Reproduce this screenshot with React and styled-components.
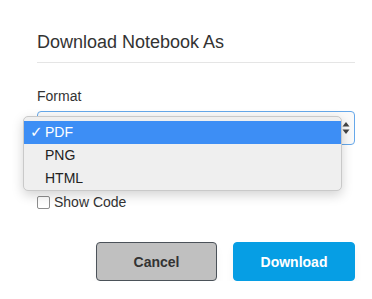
import React from "react";
import styled, { createGlobalStyle } from "styled-components";

const Global = createGlobalStyle`
  html, body { margin: 0; padding: 0; background: #fff; }
  body { font-family: "Liberation Sans", Arial, Helvetica, sans-serif; color: #333; }
`;

const Dialog = styled.div`
  width: 318px;
  padding: 32px 17px 0 37px;
`;

const Header = styled.div`
  border-bottom: 1px solid #e5e5e5;
  padding-bottom: 10px;
`;

const Title = styled.h3`
  margin: 0;
  font-size: 18px;
  line-height: 20px;
  font-weight: normal;
  color: #333;
`;

const Label = styled.div`
  margin-top: 23px;
  font-size: 14px;
  line-height: 20px;
  color: #333;
`;

const SelectWrap = styled.div`
  position: relative;
  margin-top: 5px;
  height: 32px;
  border: 1px solid #66a8ea;
  border-radius: 4px;
  background: #fafafa;
`;

const Arrows = styled.svg`
  position: absolute;
  right: 4px;
  top: 9px;
`;

const Menu = styled.ul`
  position: absolute;
  left: -15px;
  top: 4px;
  width: 319px;
  margin: 0;
  padding: 4px 0 2px;
  list-style: none;
  background: #efefef;
  border: 1px solid #c9c9c9;
  border-radius: 5px;
  box-shadow: 0 4px 12px rgba(0, 0, 0, 0.18);
  box-sizing: border-box;
  height: 75px;
`;

const Item = styled.li`
  position: relative;
  height: 23px;
  line-height: 22px;
  padding-left: 21px;
  font-size: 14px;
  color: ${(p) => (p.$active ? "#fff" : "#222")};
  background: ${(p) => (p.$active ? "#3d8ef5" : "transparent")};
`;

const Check = styled.span`
  position: absolute;
  left: 6px;
  top: 0;
  font-size: 15px;
  line-height: 22px;
  font-weight: bold;
  font-family: "DejaVu Sans", sans-serif;
`;

const CheckRow = styled.label`
  display: flex;
  align-items: center;
  gap: 4px;
  margin-top: 48px;
  font-size: 14px;
  line-height: 18px;
  color: #333;
`;

const Box = styled.span`
  width: 11px;
  height: 11px;
  border: 1px solid #8e8e8e;
  border-radius: 2px;
  background: #fff;
`;

const Footer = styled.div`
  display: flex;
  justify-content: flex-end;
  gap: 16px;
  margin-top: 31px;
`;

const Button = styled.button`
  width: ${(p) => (p.$primary ? "122px" : "121px")};
  height: 39px;
  border-radius: 4px;
  font-family: "Liberation Sans", Arial, sans-serif;
  font-weight: bold;
  font-size: 14px;
  cursor: pointer;
  border: 1px solid ${(p) => (p.$primary ? "#069ee4" : "#4b5259")};
  background: ${(p) => (p.$primary ? "#069ee4" : "#c0c0c0")};
  color: ${(p) => (p.$primary ? "#fff" : "#333")};
  box-shadow: 0 6px 10px rgba(0, 0, 0, 0.04);
`;

export default function App() {
  return (
    <>
      <Global />
      <Dialog>
        <Header>
          <Title>Download Notebook As</Title>
        </Header>
        <Label>Format</Label>
        <SelectWrap>
          <Arrows width="8" height="14" viewBox="0 0 8 14">
            <path d="M4 1 L7.5 5.5 L0.5 5.5 Z" fill="#444" />
            <path d="M4 13 L7.5 8.5 L0.5 8.5 Z" fill="#444" />
          </Arrows>
          <Menu>
            <Item $active>
              <Check>✓</Check>PDF
            </Item>
            <Item>PNG</Item>
            <Item>HTML</Item>
          </Menu>
        </SelectWrap>
        <CheckRow>
          <Box />
          Show Code
        </CheckRow>
        <Footer>
          <Button>Cancel</Button>
          <Button $primary>Download</Button>
        </Footer>
      </Dialog>
    </>
  );
}
